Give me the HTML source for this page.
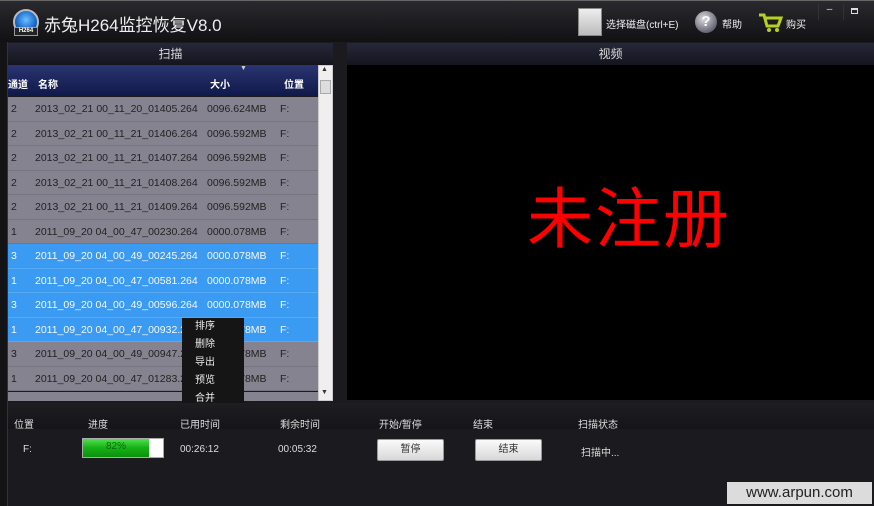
<!DOCTYPE html>
<html><head><meta charset="utf-8">
<style>
*{margin:0;padding:0;box-sizing:border-box}
body{width:874px;height:506px;overflow:hidden;background:#1b1b1f;font-family:"Liberation Sans","Noto Sans CJK SC",sans-serif;position:relative;color:#ddd}
.abs{position:absolute}
.title{left:0;top:0;width:874px;height:42px;background:linear-gradient(#2a2a2e,#111114);border-top:1px solid #666}
.ph{height:22px;background:linear-gradient(#26283a,#14151d);color:#ddd;font-size:12px;text-align:center;line-height:22px}
.row{position:absolute;left:8px;width:310px;height:24.5px;font-size:10.5px;line-height:24.5px;color:#222;border-bottom:1px solid #9a98a4}
.row span{position:absolute}
.g{background:#858390;border-bottom:1px solid #77757f}
.b{background:#3b9af2;color:#f4f8ff;border-bottom:1px solid #55aaf5}
.menu{left:182px;top:318px;width:62px;height:90px;background:#151515;color:#eee;font-size:10px}
.menu div{height:18px;line-height:18px;padding-left:13px}
.lbl{font-size:10px;color:#ddd}
.btn{background:linear-gradient(#fafafa,#d8d8d8);border:1px solid #999;color:#333;font-size:10px;text-align:center;line-height:20px;border-radius:2px}
</style></head><body>
<div class="abs title"></div>
<div class="abs" style="left:13px;top:9px;width:26px;height:26px;border-radius:50%;background:radial-gradient(circle at 50% 40%,#6cc0ff,#1464c8 60%,#0a2c60);border:2px solid #bbb"></div>
<div class="abs" style="left:14px;top:27px;width:24px;height:9px;background:#222;border:1px solid #999;color:#fff;font-size:6px;line-height:7px;text-align:center;font-weight:bold">H264</div>
<div class="abs" style="left:44px;top:11px;font-size:17px;color:#eee">赤兔H264监控恢复V8.0</div>
<div class="abs" style="left:578px;top:8px;width:24px;height:28px;background:linear-gradient(#eee,#bbb);border:1px solid #888"></div>
<div class="abs" style="left:606px;top:16px;font-size:10px;color:#eee">选择磁盘(ctrl+E)</div>
<div class="abs" style="left:695px;top:11px;width:22px;height:22px;border-radius:50%;background:radial-gradient(circle at 40% 35%,#ddd,#667 70%);color:#fff;font-weight:bold;font-size:15px;text-align:center;line-height:22px">?</div>
<div class="abs" style="left:722px;top:16px;font-size:10px;color:#eee">帮助</div>
<svg class="abs" style="left:757px;top:12px" width="26" height="22"><path d="M2 3h5l3 11h11l3-8H9" stroke="#b8d020" stroke-width="3" fill="none"/><circle cx="12" cy="18" r="2" fill="#b8d020"/><circle cx="20" cy="18" r="2" fill="#b8d020"/></svg>
<div class="abs" style="left:786px;top:16px;font-size:10px;color:#eee">购买</div>
<div class="abs" style="left:818px;top:4px;width:22px;height:16px;color:#ddd;font-size:10px;text-align:center;border-left:1px solid #333">–</div>
<div class="abs" style="left:843px;top:4px;width:22px;height:16px;border-left:1px solid #333"><div style="margin:4px auto;width:7px;height:6px;border:1px solid #ddd;border-top-width:2px"></div></div>
<div class="abs ph" style="left:8px;top:43px;width:325px">扫描</div>
<div class="abs" style="left:8px;top:65px;width:310px;height:31px;background:linear-gradient(#2a3470,#10194a);font-size:10px;color:#fff;font-weight:bold">
<span class="abs" style="left:0;top:11px">通道</span><span class="abs" style="left:30px;top:11px">名称</span><span class="abs" style="left:202px;top:11px">大小</span><span class="abs" style="left:276px;top:11px">位置</span><span class="abs" style="left:232px;top:0;font-size:7px;color:#ccc">▼</span></div>
<div class="abs" style="left:318px;top:65px;width:15px;height:336px;background:#f0eeee;border:1px solid #ccc"><div style="margin:14px 1px;height:14px;background:#ddd;border:1px solid #aaa"></div></div>
<div class="abs" style="left:321px;top:66px;font-size:7px;color:#333">▲</div>
<div class="abs" style="left:321px;top:389px;font-size:7px;color:#333">▼</div>
<div id="rows"></div>
<div class="abs" style="left:8px;top:392px;width:310px;height:9px;background:#858390"></div>
<div class="abs menu"><div>排序</div><div>删除</div><div>导出</div><div>预览</div><div>合并</div></div>
<div class="abs ph" style="left:347px;top:43px;width:527px">视频</div>
<div class="abs" style="left:347px;top:65px;width:527px;height:335px;background:#000"></div>
<div class="abs" style="left:527px;top:166px;font-size:66px;color:#f00;letter-spacing:2px">未注册</div>
<div class="abs" style="left:8px;top:403px;width:866px;height:26px;background:linear-gradient(#1e1e22,#151518)"></div>
<div class="abs lbl" style="left:14px;top:416px">位置</div>
<div class="abs lbl" style="left:88px;top:416px">进度</div>
<div class="abs lbl" style="left:180px;top:416px">已用时间</div>
<div class="abs lbl" style="left:280px;top:416px">剩余时间</div>
<div class="abs lbl" style="left:379px;top:416px">开始/暂停</div>
<div class="abs lbl" style="left:473px;top:416px">结束</div>
<div class="abs lbl" style="left:578px;top:416px">扫描状态</div>
<div class="abs lbl" style="left:23px;top:444px">F:</div>
<div class="abs" style="left:82px;top:438px;width:82px;height:20px;background:#fff;border:1px solid #aaa"><div style="width:66px;height:18px;background:linear-gradient(#4fe04f,#16b016 50%,#0c900c);color:#0a6a0a;font-size:10px;text-align:center;line-height:16px">82%</div></div>
<div class="abs lbl" style="left:180px;top:444px">00:26:12</div>
<div class="abs lbl" style="left:278px;top:444px">00:05:32</div>
<div class="abs btn" style="left:377px;top:439px;width:67px;height:22px">暂停</div>
<div class="abs btn" style="left:475px;top:439px;width:67px;height:22px">结束</div>
<div class="abs lbl" style="left:581px;top:444px">扫描中...</div>
<div class="abs" style="left:0;top:42px;width:8px;height:464px;background:#141416;border-right:1px solid #333"></div>
<div class="abs" style="left:727px;top:482px;width:145px;height:22px;background:#dcdcdc;color:#222;font-size:15px;text-align:center;line-height:22px">www.arpun.com</div>
<script>
var d=[["2","2013_02_21 00_11_20_01405.264","0096.624MB",0],["2","2013_02_21 00_11_21_01406.264","0096.592MB",0],["2","2013_02_21 00_11_21_01407.264","0096.592MB",0],["2","2013_02_21 00_11_21_01408.264","0096.592MB",0],["2","2013_02_21 00_11_21_01409.264","0096.592MB",0],["1","2011_09_20 04_00_47_00230.264","0000.078MB",0],["3","2011_09_20 04_00_49_00245.264","0000.078MB",1],["1","2011_09_20 04_00_47_00581.264","0000.078MB",1],["3","2011_09_20 04_00_49_00596.264","0000.078MB",1],["1","2011_09_20 04_00_47_00932.264","0000.078MB",1],["3","2011_09_20 04_00_49_00947.264","0000.078MB",0],["1","2011_09_20 04_00_47_01283.264","0000.078MB",0]];
var h="";d.forEach(function(r,i){h+='<div class="row '+(r[3]?'b':'g')+'" style="top:'+(97+i*24.5)+'px"><span style="left:3px">'+r[0]+'</span><span style="left:27px">'+r[1]+'</span><span style="left:199px">'+r[2]+'</span><span style="left:272px">F:</span></div>';});
document.getElementById("rows").innerHTML=h;
</script>
</body></html>
